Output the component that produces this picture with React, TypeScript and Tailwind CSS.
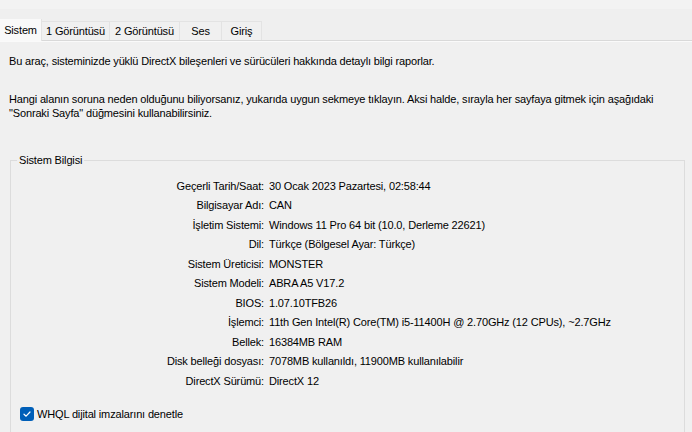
const tabs = ["Sistem", "1 Görüntüsü", "2 Görüntüsü", "Ses", "Giriş"];
const tabWidths = ["w-[42px]", "w-[68px]", "w-[70px]", "w-[42px]", "w-[40px]"];

const rows: [string, string][] = [
  ["Geçerli Tarih/Saat:", "30 Ocak 2023 Pazartesi, 02:58:44"],
  ["Bilgisayar Adı:", "CAN"],
  ["İşletim Sistemi:", "Windows 11 Pro 64 bit (10.0, Derleme 22621)"],
  ["Dil:", "Türkçe (Bölgesel Ayar: Türkçe)"],
  ["Sistem Üreticisi:", "MONSTER"],
  ["Sistem Modeli:", "ABRA A5 V17.2"],
  ["BIOS:", "1.07.10TFB26"],
  ["İşlemci:", "11th Gen Intel(R) Core(TM) i5-11400H @ 2.70GHz (12 CPUs), ~2.7GHz"],
  ["Bellek:", "16384MB RAM"],
  ["Disk belleği dosyası:", "7078MB kullanıldı, 11900MB kullanılabilir"],
  ["DirectX Sürümü:", "DirectX 12"],
];

export default function App() {
  return (
    <div className="w-[692px] h-[432px] overflow-hidden bg-[#f0f0f0] text-[11px] tracking-[-0.15px] text-black font-['Liberation_Sans',sans-serif]">
      <div className="h-[9px] bg-[#f3f3f3]" />
      <div className="flex h-[32px] items-end bg-[#efefef] border-b border-[#d9d9d9]">
        {tabs.map((t, i) =>
          i === 0 ? (
            <div key={t} className={`${tabWidths[i]} h-[22px] -mb-px flex items-center justify-center bg-[#f9f9f9] border-r border-[#e3e3e3]`}>
              {t}
            </div>
          ) : (
            <div key={t} className={`${tabWidths[i]} h-[19px] flex items-center justify-center border-t border-r border-[#e3e3e3] bg-[#f0f0f0]`}>
              {t}
            </div>
          ),
        )}
      </div>
      <div className="border-t border-[#fafafa]">
        <p className="pl-[9px] pt-[12px] leading-[15px]">
          Bu araç, sisteminizde yüklü DirectX bileşenleri ve sürücüleri hakkında detaylı bilgi raporlar.
        </p>
        <p className="pl-[9px] pt-[23px] leading-[14px] whitespace-nowrap">
          Hangi alanın soruna neden olduğunu biliyorsanız, yukarıda uygun sekmeye tıklayın. Aksi halde, sırayla her sayfaya gitmek için aşağıdaki
          <br />
          "Sonraki Sayfa" düğmesini kullanabilirsiniz.
        </p>
        <div className="relative ml-[10px] mr-[7px] mt-[40px] h-[300px] border border-[#dcdcdc]">
          <span className="absolute left-[6px] -top-[8px] bg-[#f0f0f0] px-[2px] leading-[15px]">Sistem Bilgisi</span>
          <div className="pt-[15px] grid grid-cols-[253px_1fr] gap-x-[5px]">
            {rows.map(([k, v]) => (
              <div key={k} className="contents">
                <div className="h-[19.5px] flex items-center justify-end">{k}</div>
                <div className="h-[19.5px] flex items-center">{v}</div>
              </div>
            ))}
          </div>
          <div className="mt-[15px] ml-[9px] flex items-center gap-[3px]">
            <div className="w-[14px] h-[14px] rounded-[3px] bg-[#005fb8] flex items-center justify-center">
              <svg width="10" height="10" viewBox="0 0 10 10" fill="none">
                <path d="M2 5.2 L4.1 7.2 L8 3" stroke="white" strokeWidth="1.2" strokeLinecap="round" strokeLinejoin="round" />
              </svg>
            </div>
            <span>WHQL dijital imzalarını denetle</span>
          </div>
        </div>
      </div>
    </div>
  );
}
